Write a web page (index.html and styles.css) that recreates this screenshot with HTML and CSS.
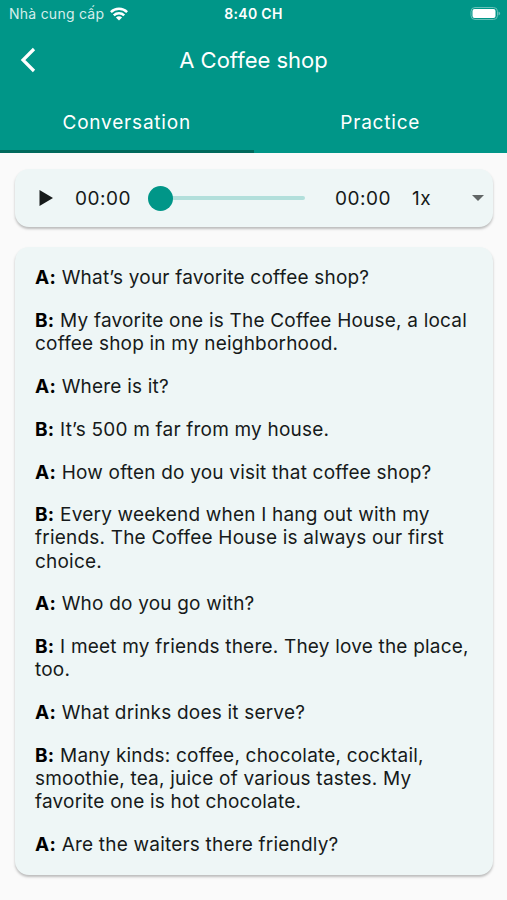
FILE: index.html
```html
<!DOCTYPE html>
<html lang="vi">
<head>
  <meta charset="UTF-8">
  <meta name="viewport" content="width=device-width, initial-scale=1.0">
  <title>A Coffee shop</title>
  <link rel="stylesheet" href="styles.css">
</head>
<body>

<header>
  <div class="status-bar">
    <div class="carrier">
      <span>Nhà cung cấp</span>
      <svg class="wifi" viewBox="0 0 18 14" width="18" height="14">
        <path d="M.9 5.2a11.5 11.5 0 0 1 16.2 0M3.8 8.3a7.4 7.4 0 0 1 10.4 0" fill="none" stroke="#fff" stroke-width="2.5"/>
        <path d="M9 13.6L5.9 10.5a4.4 4.4 0 0 1 6.2 0z" fill="#fff"/>
      </svg>
    </div>
    <div class="clock">8:40 CH</div>
    <div class="battery">
      <svg viewBox="0 0 31 14" width="31" height="14">
        <rect x="1" y=".5" width="26.5" height="12" rx="4" fill="none" stroke="#66c0b8"/>
        <rect x="2.5" y="2" width="23" height="9" rx="2" fill="#fff"/>
        <path d="M28.5 4.500q1.600.6 1.600 2t-1.600 2z" fill="#66c0b8"/>
      </svg>
    </div>
  </div>
  <div class="app-bar">
    <a class="back" href="#" aria-label="Back">
      <svg viewBox="0 0 16 26" width="16" height="26">
        <path d="M14 2L3 13l11 11" fill="none" stroke="#fff" stroke-width="3.2"/>
      </svg>
    </a>
    <h1>A Coffee shop</h1>
  </div>
  <nav>
    <a class="active" href="#">Conversation</a>
    <a href="#">Practice</a>
  </nav>
</header>

<main>
  <section class="player">
    <svg class="play" viewBox="0 0 14 18" width="14" height="18"><path d="M.5 1L14 9 .5 17z" fill="#161a1a"/></svg>
    <span class="current">00:00</span>
    <div class="slider"><span class="thumb"></span></div>
    <span class="total">00:00</span>
    <span class="speed">1x</span>
    <span class="arrow"></span>
  </section>

  <section class="dialog">
    <p><b>A:</b> What’s your favorite coffee shop?</p>
    <p><b>B:</b> My favorite one is The Coffee House, a local<br>coffee shop in my neighborhood.</p>
    <p><b>A:</b> Where is it?</p>
    <p><b>B:</b> It’s 500 m far from my house.</p>
    <p><b>A:</b> How often do you visit that coffee shop?</p>
    <p><b>B:</b> Every weekend when I hang out with my<br>friends. The Coffee House is always our first<br>choice.</p>
    <p><b>A:</b> Who do you go with?</p>
    <p><b>B:</b> I meet my friends there. They love the place,<br>too.</p>
    <p><b>A:</b> What drinks does it serve?</p>
    <p><b>B:</b> Many kinds: coffee, chocolate, cocktail,<br>smoothie, tea, juice of various tastes. My<br>favorite one is hot chocolate.</p>
    <p><b>A:</b> Are the waiters there friendly?</p>
  </section>
</main>

</body>
</html>
```
FILE: styles.css
```css
:root {
  --primary-color: #009688;
  --primary-dark: #00695c;
  --card: #eef6f6;
  --background: #fafafa;
  --text-main: #161a1a;
}

* {
  box-sizing: border-box;
}

body {
  margin: 0;
  height: 900px;
  overflow: hidden;
  font-family: Inter, "Liberation Sans", sans-serif;
  background-color: var(--background);
  color: var(--text-main);
}

header {
  height: 153px;
  background-color: var(--primary-color);
  color: #fff;
}

.status-bar {
  display: grid;
  grid-template-columns: 1fr auto 1fr;
  align-items: center;
  height: 27px;
  padding: 0 6px 0 9px;
}

.carrier {
  display: flex;
  align-items: center;
  gap: 6px;
  font-size: 14px;
  letter-spacing: 0.25px;
  color: #d5eeeb;
}

.clock {
  margin-right: 3px;
  font-size: 14px;
  font-weight: 600;
  letter-spacing: 0.3px;
}

.battery {
  display: flex;
  justify-content: flex-end;
}

.app-bar {
  display: grid;
  grid-template-columns: 60px 1fr 60px;
  align-items: center;
  height: 66px;
}

.back {
  display: flex;
  padding-left: 20px;
}

.app-bar h1 {
  margin: 0;
  text-align: center;
  font-size: 22px;
  font-weight: 400;
}

nav {
  display: flex;
  height: 60px;
}

nav a {
  flex: 1;
  text-align: center;
  line-height: 59px;
  font-size: 19px;
  letter-spacing: 0.8px;
  color: #fff;
  text-decoration: none;
  border-bottom: 3px solid transparent;
}

nav a.active {
  border-bottom-color: var(--primary-dark);
}

main {
  padding: 16px 14px 16px 15px;
}

.player, .dialog {
  background-color: var(--card);
  border-radius: 14px;
  box-shadow: 0 2px 2.5px rgba(0,0,0,0.25);
}

.player {
  display: flex;
  align-items: center;
  height: 58px;
  padding: 0 9px 0 24px;
  font-size: 19px;
  letter-spacing: 0.5px;
}

.current {
  width: 57px;
  margin-left: 22px;
}

.slider {
  display: flex;
  align-items: center;
  width: 157px;
  height: 4px;
  margin-left: 16px;
  background-color: #b2dfdb;
  border-radius: 2px;
}

.thumb {
  width: 25px;
  height: 25px;
  border-radius: 50%;
  background-color: var(--primary-color);
}

.total {
  width: 56px;
  margin-left: 30px;
}

.speed {
  margin-left: 21px;
}

.arrow {
  margin-left: auto;
  border: 6px solid transparent;
  border-top-color: #616666;
  border-bottom: 0;
}

.dialog {
  margin-top: 20px;
  height: 628px;
  padding: 19.4px 20px;
  font-size: 19px;
  line-height: 23.1px;
  letter-spacing: 0.2px;
  white-space: nowrap;
}

.dialog p {
  margin: 0 0 19.7px;
}

.dialog b {
  letter-spacing: 0.3px;
  color: #000;
}
```
